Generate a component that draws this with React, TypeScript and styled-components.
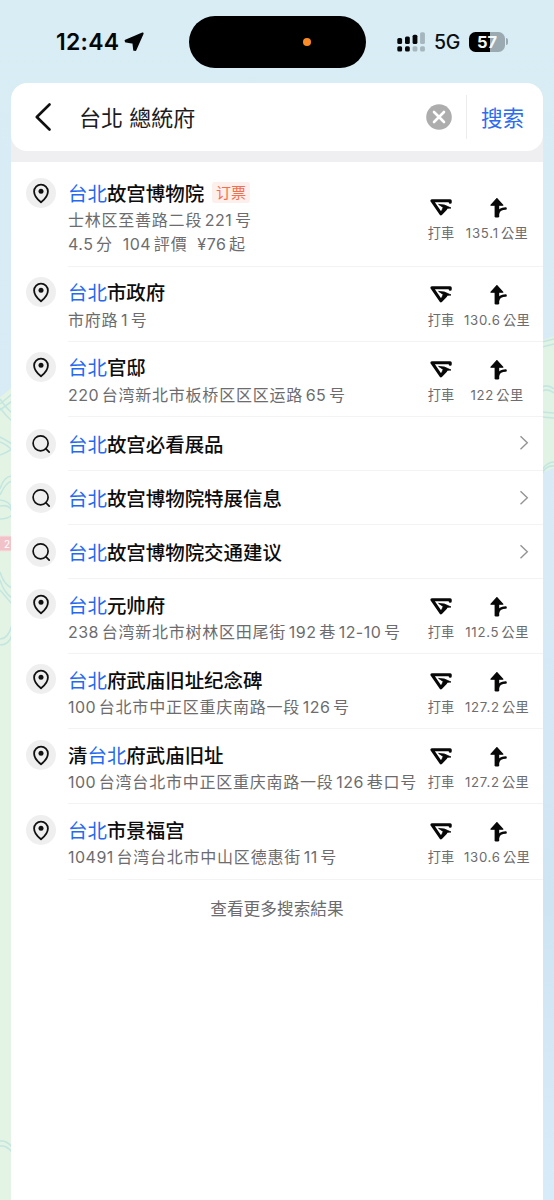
import React from "react";
import styled, { createGlobalStyle } from "styled-components";

const GlobalStyle = createGlobalStyle`
  * { box-sizing: border-box; }
  body {
    margin: 0;
    background: #d9ecf5;
    font-family: Inter, "Noto Sans CJK SC", sans-serif;
    -webkit-font-smoothing: antialiased;
  }
`;

const Screen = styled.div`
  position: relative;
  width: 554px;
  height: 1200px;
  overflow: hidden;
  display: flex;
  flex-direction: column;
`;

const MapLayer = styled.svg`
  position: absolute;
  inset: 0;
  z-index: -1;
`;

const StatusBar = styled.header`
  height: 83px;
  flex: none;
  display: grid;
  grid-template-columns: 189px 177px 1fr;
`;

const Clock = styled.div`
  display: flex;
  align-items: center;
  gap: 5px;
  height: 83px;
  padding-left: 56px;
  font-size: 23px;
  font-weight: 600;
  letter-spacing: 0.25px;
  color: #050607;
`;

const Island = styled.div`
  height: 52px;
  margin-top: 16px;
  border-radius: 26px;
  background: #000;
  display: flex;
  align-items: center;
  padding-left: 114px;
`;

const MicDot = styled.span`
  width: 8px;
  height: 8px;
  border-radius: 50%;
  background: #fb8c25;
`;

const Connectivity = styled.div`
  display: flex;
  align-items: center;
  height: 83px;
  padding-left: 31px;
`;

const Network = styled.span`
  width: 36px;
  padding-left: 8px;
  margin-right: 7px;
  font-size: 19.5px;
  font-weight: 500;
  letter-spacing: -0.4px;
  color: #0c0f11;
`;

const Battery = styled.div`
  display: flex;
  align-items: center;
  gap: 1px;

  &::after {
    content: "";
    width: 2px;
    height: 7px;
    border-radius: 0 3px 3px 0;
    background: #9ba9b1;
  }
`;

const BatteryBody = styled.div`
  width: 36px;
  height: 20px;
  border-radius: 6.5px;
  background: linear-gradient(90deg, #000 57%, #9ba9b1 57%);
  display: flex;
  align-items: center;
  justify-content: center;
  font-size: 16.5px;
  font-weight: 700;
  color: #f4f9fb;
`;

const Panel = styled.main`
  flex: 1;
  width: 532px;
  margin-left: 11px;
  display: flex;
  flex-direction: column;
  border-radius: 16px 16px 0 0;
  background: #efeff1;
  overflow: hidden;
`;

const SearchBar = styled.div`
  flex: none;
  height: 68px;
  display: flex;
  align-items: center;
  border-radius: 16px;
  background: #fff;
`;

const BackButton = styled.span`
  width: 68px;
  height: 28px;
  padding-left: 23px;
`;

const Query = styled.span`
  flex: 1;
  padding-top: 2px;
  font-size: 22px;
  line-height: 32px;
  font-family: Inter, "Noto Sans CJK TC", sans-serif;
  color: #1c1c1e;
`;

const ClearButton = styled.span`
  width: 26px;
  height: 26px;
  margin-right: 14px;
`;

const SearchButton = styled.span`
  height: 44px;
  width: 77px;
  border-left: 1px solid #ececee;
  padding-left: 14px;
  font-size: 21.6px;
  line-height: 46px;
  color: #2b6cf0;
`;

const List = styled.section`
  flex: 1;
  margin-top: 11px;
  padding-top: 5.5px;
  background: #fff;
`;

const Row = styled.article<{ $height: number }>`
  height: ${(p) => p.$height}px;
  display: flex;
  padding-left: 15px;
`;

const IconDisc = styled.span<{ $top: number }>`
  flex: none;
  width: 30px;
  height: 30px;
  margin: ${(p) => p.$top}px 12px 0 0;
  border-radius: 50%;
  background: #efefef;
`;

const RowBody = styled.div`
  flex: 1;
  min-width: 0;
  display: flex;
  align-items: center;
  border-bottom: 1px solid #f3f3f4;
`;

const Details = styled.div`
  flex: 1;
  align-self: flex-start;
  white-space: nowrap;
`;

const TitleLine = styled.div<{ $top: number }>`
  display: flex;
  align-items: center;
  height: 30px;
  margin-top: ${(p) => p.$top}px;
  margin-bottom: 1px;
`;

const Title = styled.span`
  font-size: 19.45px;
  font-weight: 500;
  color: #0c0c0d;
`;

const Match = styled.span`
  font-weight: 400;
  color: #2569f0;
`;

const Badge = styled.span`
  height: 21px;
  width: 38px;
  margin-left: 8px;
  border-radius: 3px;
  background: #fdefeb;
  color: #f2704f;
  font-size: 15px;
  line-height: 21px;
  text-align: center;
`;

const Address = styled.div`
  height: 24px;
  font-size: 16px;
  line-height: 24px;
  color: #6c6c6e;
`;

const Run = styled.span<{ $cjk: boolean; $lead: boolean; $small?: boolean }>`
  white-space: pre;
  letter-spacing: ${(p) => (p.$cjk ? (p.$small ? 0.4 : 0.77) : p.$small ? 0.75 : 0.48)}px;
  margin-left: ${(p) => (p.$lead ? (p.$small ? 2.2 : 2.7) : 0)}px;
`;

const Actions = styled.div`
  display: flex;
  padding: 7px 13px 0 0;
`;

const Action = styled.div<{ $width: number }>`
  width: ${(p) => p.$width}px;
  display: flex;
  flex-direction: column;
  align-items: center;
  font-family: Inter, "Noto Sans CJK TC", sans-serif;
  font-size: 13.2px;
  line-height: 20px;
  color: #6c6c6e;
  white-space: nowrap;

  svg { margin-bottom: 5px; }
`;

const Trailing = styled.span`
  height: 16px;
  width: 24px;
`;

const More = styled.div`
  padding-top: 15px;
  text-align: center;
  font-family: "Noto Sans CJK TC", sans-serif;
  font-size: 16.7px;
  line-height: 26px;
  color: #6c6c6e;
`;

const Mixed = ({ text, small }: { text: string; small?: boolean }) => {
  const runs = text.match(/[\u3000-\u9fff]+|[^\u3000-\u9fff]+/g) ?? [];
  return (
    <>
      {runs.map((run, i) => (
        <Run
          key={i}
          $cjk={/[\u3000-\u9fff]/.test(run)}
          $lead={i > 0 && !run.startsWith(" ")}
          $small={small}
        >
          {run}
        </Run>
      ))}
    </>
  );
};

const PinIcon = () => (
  <svg width="30" height="30" viewBox="0 0 30 30" fill="none">
    <path
      d="M15 24.300C12.200 22.100 8.100 18.500 8.100 13.500a6.900 6.900 0 0 1 13.800 0c0 5-4.100 8.600-6.900 10.800Z"
      stroke="#111"
      strokeWidth="1.8"
      strokeLinejoin="round"
    />
    <circle cx="15" cy="13.200" r="2.500" fill="#111" />
  </svg>
);

const LensIcon = () => (
  <svg width="30" height="30" viewBox="0 0 30 30" fill="none" stroke="#111" strokeWidth="1.700">
    <circle cx="14.600" cy="14.300" r="7.500" />
    <path d="M19.800 19.700l3.400 3.500" strokeLinecap="round" />
  </svg>
);

const TaxiIcon = () => (
  <svg width="22" height="20" viewBox="0 0 22 20" fill="none" stroke="#080808" strokeLinejoin="round">
    <path d="M20.200 4.200V2.700H1.900L11 15.800l4.800-5.200" strokeWidth="3.100" strokeLinecap="round" />
    <path d="M8.600 6.400l5.800.6 6.600 3-5 .4-4.800 3.600 2-4.600Z" fill="#080808" strokeWidth="0.800" />
  </svg>
);

const RouteIcon = () => (
  <svg width="20" height="20" viewBox="0 0 20 20" fill="none" stroke="#080808" strokeLinejoin="round">
    <path d="M9.900 0.600L4 7.200h11.800Z" fill="#080808" strokeWidth="1.200" />
    <path d="M7.600 6h4.600v12.200q0 1.300-1.300 1.300h-2q-1.300 0-1.300-1.300Z" fill="#080808" stroke="none" />
    <path d="M11.200 15c.6-2.400 3-4.200 7.400-4.400" strokeWidth="2.500" strokeLinecap="round" />
  </svg>
);

const SignalIcon = () => (
  <svg width="29" height="20" viewBox="0 0 29 20" fill="#050607">
    <rect x="0.300" y="6" width="4.800" height="6" rx="1.500" />
    <rect x="8" y="4.600" width="4.800" height="7.400" rx="1.500" />
    <rect x="15.600" y="2.700" width="4.800" height="9.300" rx="1.500" />
    <rect x="23.100" y="0.200" width="4.800" height="11.800" rx="1.500" fill="#a5b6be" />
    <rect x="0.300" y="14.200" width="4.800" height="5.200" rx="1.500" />
    <rect x="8" y="14.200" width="4.800" height="5.200" rx="1.500" />
    <rect x="15.600" y="14.200" width="4.800" height="5.200" rx="1.500" fill="#a5b6be" />
    <rect x="23.100" y="14.200" width="4.800" height="5.200" rx="1.500" fill="#a5b6be" />
  </svg>
);

const MapBackdrop = () => (
  <MapLayer width="554" height="1200" viewBox="0 0 554 1200" fill="none">
    <defs>
      <linearGradient id="sea" x1="0" y1="0" x2="0" y2="1">
        <stop offset="0" stopColor="#d9edf5" />
        <stop offset="0.500" stopColor="#d7eaf6" />
        <stop offset="0.750" stopColor="#cfe4f3" />
        <stop offset="1" stopColor="#d8ebf8" />
      </linearGradient>
    </defs>
    <rect width="554" height="1200" fill="url(#sea)" />
    <path d="M0 397L14 386V1200H0Z" fill="#e4f4e4" />
    <path d="M540 341l14-5v132l-14 6Z" fill="#e0f3e4" />
    <g stroke="#c4e6e1" strokeWidth="1.600">
      <path d="M0 404l12-10M0 410l12-9M0 399q6 9 12 14M0 408q6 8 12 13" />
      <path d="M0 437q6 3 12 7M0 442q6 2 12 8M0 455q6-2 12-6" />
      <path d="M0 489q4-13 12-13M0 495q6-13 12-14" />
      <path d="M0 500q10 1 12 9M0 506q10-2 12 6M0 519q8 0 12-4" />
      <path d="M0 572q4 13 12 16M0 580q4 13 12 18M0 590l12 14" />
      <path d="M0 639q8 0 12-14M0 645q9 0 12-10" />
      <path d="M0 1141q6-1 12 6M0 1146q6-1 12 6" />
      <path d="M542 342l12-3M542 347l12-3M542 387q6-3 12 2M542 391q6-3 12 2" />
      <path d="M542 412l12 1M542 417l12 1M542 474q4-9 12-8M542 470q5-8 12-8" />
    </g>
    <rect x="-2" y="536" width="15" height="15" rx="2" fill="#f1c3c8" stroke="#f8dfe0" />
    <text x="4" y="548" fontSize="10" fill="#fff">2</text>
  </MapLayer>
);

type Place = {
  kind: "place";
  title: string;
  badge?: string;
  lines: string[];
  distance: string;
};
type Suggestion = { kind: "suggestion"; title: string };

const results: (Place | Suggestion)[] = [
  {
    kind: "place",
    title: "台北故宫博物院",
    badge: "订票",
    lines: ["士林区至善路二段221号", "4.5分  104評價  ¥76起"],
    distance: "135.1公里",
  },
  { kind: "place", title: "台北市政府", lines: ["市府路1号"], distance: "130.6公里" },
  { kind: "place", title: "台北官邸", lines: ["220台湾新北市板桥区区区运路65号"], distance: "122公里" },
  { kind: "suggestion", title: "台北故宫必看展品" },
  { kind: "suggestion", title: "台北故宫博物院特展信息" },
  { kind: "suggestion", title: "台北故宫博物院交通建议" },
  { kind: "place", title: "台北元帅府", lines: ["238台湾新北市树林区田尾街192巷12-10号"], distance: "112.5公里" },
  { kind: "place", title: "台北府武庙旧址纪念碑", lines: ["100台北市中正区重庆南路一段126号"], distance: "127.2公里" },
  { kind: "place", title: "清台北府武庙旧址", lines: ["100台湾台北市中正区重庆南路一段126巷口号"], distance: "127.2公里" },
  { kind: "place", title: "台北市景福宫", lines: ["10491台湾台北市中山区德惠街11号"], distance: "130.6公里" },
];

const HighlightedTitle = ({ text }: { text: string }) => {
  const [before, after] = text.split("台北");
  return (
    <Title>
      {before}
      <Match>台北</Match>
      {after}
    </Title>
  );
};

const PlaceRow = ({ item }: { item: Place }) => (
  <Row $height={item.lines.length > 1 ? 99.2 : 75.1}>
    <IconDisc $top={10.2}>
      <PinIcon />
    </IconDisc>
    <RowBody>
      <Details>
        <TitleLine $top={9.9}>
          <HighlightedTitle text={item.title} />
          {item.badge && <Badge>{item.badge}</Badge>}
        </TitleLine>
        {item.lines.map((line) => (
          <Address key={line}>
            <Mixed text={line} />
          </Address>
        ))}
      </Details>
      <Actions>
        <Action $width={46}>
          <TaxiIcon />
          打車
        </Action>
        <Action $width={66}>
          <RouteIcon />
          <span>
            <Mixed text={item.distance} small />
          </span>
        </Action>
      </Actions>
    </RowBody>
  </Row>
);

const SuggestionRow = ({ item }: { item: Suggestion }) => (
  <Row $height={54.1}>
    <IconDisc $top={12}>
      <LensIcon />
    </IconDisc>
    <RowBody>
      <Details>
        <TitleLine $top={11.3}>
          <HighlightedTitle text={item.title} />
        </TitleLine>
      </Details>
      <Trailing>
        <svg width="10" height="16" viewBox="0 0 10 16" fill="none" stroke="#949494" strokeWidth="1.400">
          <path d="M1.500 1.200L8.300 7.700l-6.800 6.500" />
        </svg>
      </Trailing>
    </RowBody>
  </Row>
);

export default function App() {
  return (
    <>
      <GlobalStyle />
      <Screen>
        <MapBackdrop />
        <StatusBar>
          <Clock>
            12:44
            <svg width="20" height="20" viewBox="0 0 20 20">
              <path
                d="M18.600 1.500L1.600 8.600L2 9.600L9.400 10.800L10.200 17.800L11.400 17.900Z"
                fill="#050607"
                stroke="#050607"
                strokeWidth="2"
                strokeLinejoin="round"
              />
            </svg>
          </Clock>
          <Island>
            <MicDot />
          </Island>
          <Connectivity>
            <SignalIcon />
            <Network>5G</Network>
            <Battery>
              <BatteryBody>57</BatteryBody>
            </Battery>
          </Connectivity>
        </StatusBar>
        <Panel>
          <SearchBar>
            <BackButton>
              <svg width="20" height="28" viewBox="0 0 20 28" fill="none" stroke="#111" strokeWidth="2.600">
                <path d="M15.500 1.500L2.800 14l12.700 12.500" strokeLinecap="round" strokeLinejoin="round" />
              </svg>
            </BackButton>
            <Query>台北 總統府</Query>
            <ClearButton>
              <svg width="26" height="26" viewBox="0 0 26 26">
                <circle cx="13" cy="13" r="12.800" fill="#adadad" />
                <path d="M8 8l10 10M18 8L8 18" stroke="#fff" strokeWidth="2.600" strokeLinecap="round" />
              </svg>
            </ClearButton>
            <SearchButton>搜索</SearchButton>
          </SearchBar>
          <List>
            {results.map((item) =>
              item.kind === "place" ? (
                <PlaceRow key={item.title} item={item} />
              ) : (
                <SuggestionRow key={item.title} item={item} />
              )
            )}
            <More>查看更多搜索結果</More>
          </List>
        </Panel>
      </Screen>
    </>
  );
}
